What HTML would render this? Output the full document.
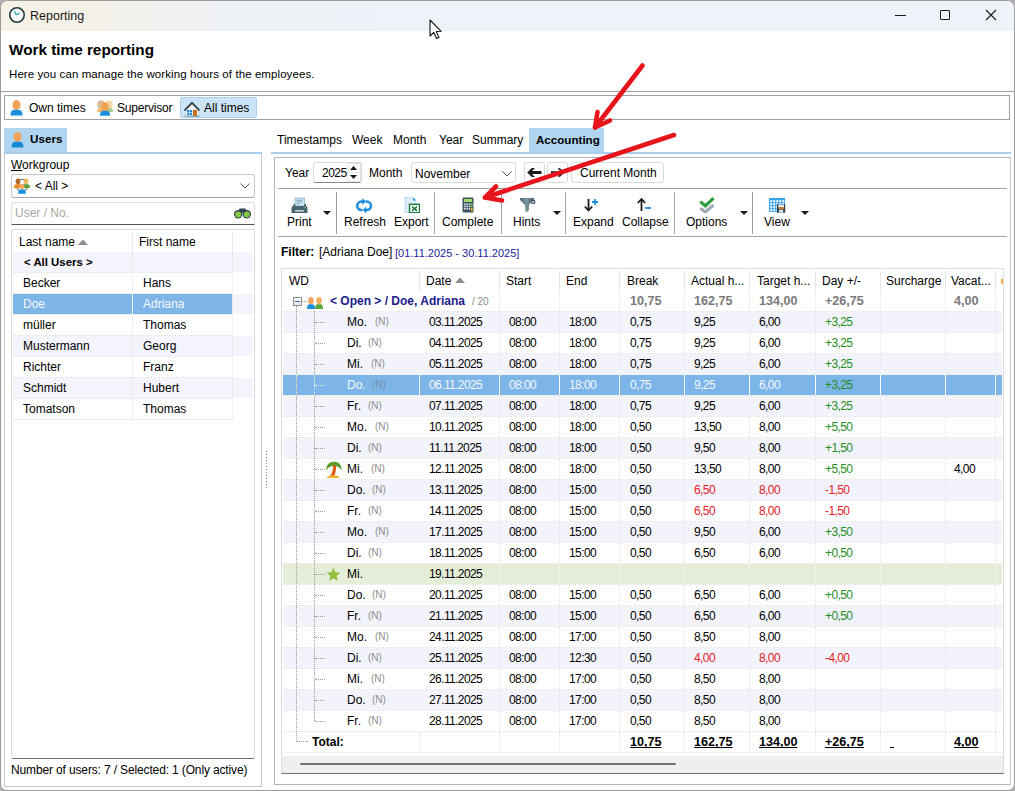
<!DOCTYPE html><html><head><meta charset="utf-8"><style>
*{box-sizing:border-box;margin:0;padding:0}
html,body{width:1015px;height:791px;overflow:hidden;background:#b0b0b0;font-family:"Liberation Sans", sans-serif;color:#000}
.ab{position:absolute}
.t{position:absolute;white-space:nowrap;font-size:12px;line-height:14px}
.win{position:absolute;left:0;top:0px;width:1015px;height:791px;background:#fff;border:1px solid #9c9c9c;border-radius:8px 8px 7px 7px;overflow:hidden}
.title{position:absolute;left:0;top:0;width:1013px;height:30px;background:linear-gradient(90deg,#f6f2e6 0px,#f4f1e8 90px,#eef1f5 220px,#eef2f9 400px,#eef2f9 100%)}
.hl{position:absolute;height:1px;background:#a0a0a0}
.vl{position:absolute;width:1px;background:#a0a0a0}
.grid .c{position:absolute;white-space:nowrap;font-size:11.5px;line-height:21px;top:0;height:21px}
</style></head><body>
<div class="win">
<div class="title"></div>
</div>
<svg class="ab" style="left:8px;top:6px" width="18" height="18" viewBox="0 0 18 18"><circle cx="9" cy="9" r="7.2" fill="#fbfcfc" stroke="#1f3a40" stroke-width="1.6"/><path d="M6.2 5.2 L8.2 8.6 L11.6 7.2" fill="none" stroke="#3bb3bf" stroke-width="1.5"/></svg>
<div class="t" style="left:30px;top:9px;font-size:12.5px;color:#1a1a1a">Reporting</div>
<div class="ab" style="left:895px;top:15px;width:11px;height:1px;background:#1a1a1a"></div>
<div class="ab" style="left:940px;top:10px;width:10px;height:10px;border:1px solid #1a1a1a;border-radius:1px"></div>
<svg class="ab" style="left:985px;top:9px" width="12" height="12" viewBox="0 0 12 12"><path d="M1 1 L11 11 M11 1 L1 11" stroke="#1a1a1a" stroke-width="1.1"/></svg>
<div class="t" style="left:9px;top:41px;font-size:15.3px;font-weight:bold;line-height:17px">Work time reporting</div>
<div class="t" style="left:9px;top:67px;font-size:11.5px;letter-spacing:0.08px">Here you can manage the working hours of the employees.</div>
<div class="ab" style="left:1px;top:91px;width:1013px;height:1px;background:#a0a0a0"></div>
<div class="ab" style="left:4px;top:95px;width:1006px;height:25px;border:1px solid #a0a0a0"></div>
<div class="ab" style="left:180px;top:97px;width:77px;height:21px;background:#cce4f7;border:1px solid #a9d1f2;border-radius:2px"></div>
<div class="t" style="left:29px;top:101px;font-size:12px">Own times</div>
<div class="t" style="left:117px;top:101px;font-size:12px;letter-spacing:-0.2px">Supervisor</div>
<div class="t" style="left:204px;top:101px;font-size:12px">All times</div>
<div class="ab" style="left:4px;top:128px;width:63px;height:25px;background:#b1d5f0"></div>
<div class="t" style="left:30px;top:132px;font-size:11.7px;font-weight:bold">Users</div>
<div class="ab" style="left:4px;top:152px;width:258px;height:2px;background:#a8cfee"></div>
<div class="ab" style="left:4px;top:154px;width:258px;height:633px;border:1px solid #c8c8c8;border-top:none"></div>
<div class="t" style="left:11px;top:158px;font-size:12px"><u>W</u>orkgroup</div>
<div class="ab" style="left:11px;top:174px;width:244px;height:24px;border:1px solid #c8c8c8;border-bottom-color:#a8a8a8;border-radius:3px;background:#fff"></div>
<div class="t" style="left:35px;top:179px;font-size:12px">&lt; All &gt;</div>
<div class="ab" style="left:11px;top:202px;width:244px;height:23px;border:1px solid #e0e0e0;border-bottom:1px solid #555;border-radius:3px 3px 0 0;background:#fff"></div>
<div class="t" style="left:15px;top:206px;font-size:12px;color:#a8a8a8">User / No.</div>
<div class="ab" style="left:11px;top:229px;width:244px;height:530px;border:1px solid #dcdcdc;border-bottom:1px solid #707070;border-radius:2px;background:#fff"></div>
<div class="t" style="left:19px;top:235px;font-size:12px">Last name</div>
<div class="t" style="left:139px;top:235px;font-size:12px">First name</div>
<div class="ab" style="left:132px;top:232px;width:1px;height:20px;background:#e8e8e8"></div>
<div class="ab" style="left:232px;top:232px;width:1px;height:20px;background:#e8e8e8"></div>
<div class="t" style="left:11px;top:763px;font-size:12px;letter-spacing:-0.14px">Number of users: 7 / Selected: 1 (Only active)</div>
<div class="ab" style="left:266px;top:451px;width:1px;height:37px;background:repeating-linear-gradient(#7a7a7a 0 1px,transparent 1px 3px)"></div>
<div class="ab" style="left:529px;top:128px;width:75px;height:25px;background:#b1d5f0"></div>
<div class="t" style="left:277px;top:133px;font-size:12px">Timestamps</div>
<div class="t" style="left:352px;top:133px;font-size:12px">Week</div>
<div class="t" style="left:393px;top:133px;font-size:12px">Month</div>
<div class="t" style="left:439px;top:133px;font-size:12px">Year</div>
<div class="t" style="left:472px;top:133px;font-size:12px">Summary</div>
<div class="t" style="left:536px;top:133px;font-size:11.6px;font-weight:bold">Accounting</div>
<div class="ab" style="left:271px;top:152px;width:740px;height:2px;background:#a8cfee"></div>
<div class="ab" style="left:274px;top:157px;width:737px;height:628px;border:1px solid #b4b4b4;border-right:1px solid #d0d0d0"></div>
<div class="t" style="left:285px;top:166px;font-size:12px">Year</div>
<div class="ab" style="left:313px;top:162px;width:49px;height:21px;border:1px solid #dadada;border-bottom:1px solid #8a8a8a;border-radius:3px"></div>
<div class="t" style="left:322px;top:166px;font-size:12px;letter-spacing:-0.5px">2025</div>
<div class="t" style="left:369px;top:166px;font-size:12px">Month</div>
<div class="ab" style="left:411px;top:162px;width:105px;height:21px;border:1px solid #dadada;border-radius:3px"></div>
<div class="t" style="left:415px;top:167px;font-size:12px">November</div>
<div class="ab" style="left:524px;top:162px;width:21px;height:21px;border:1px solid #dadada;border-radius:3px"></div>
<div class="ab" style="left:547px;top:162px;width:21px;height:21px;border:1px solid #dadada;border-radius:3px"></div>
<div class="ab" style="left:571px;top:162px;width:93px;height:21px;border:1px solid #dadada;border-radius:3px"></div>
<div class="t" style="left:580px;top:166px;font-size:12px">Current Month</div>
<div class="ab" style="left:278px;top:188px;width:729px;height:1px;background:#a0a0a0"></div>
<div class="ab" style="left:278px;top:236px;width:729px;height:1px;background:#a4a4a4"></div>
<div class="ab" style="left:336px;top:192px;width:1px;height:42px;background:#a0a0a0"></div>
<div class="ab" style="left:434px;top:192px;width:1px;height:42px;background:#a0a0a0"></div>
<div class="ab" style="left:501px;top:192px;width:1px;height:42px;background:#a0a0a0"></div>
<div class="ab" style="left:565px;top:192px;width:1px;height:42px;background:#a0a0a0"></div>
<div class="ab" style="left:674px;top:192px;width:1px;height:42px;background:#a0a0a0"></div>
<div class="ab" style="left:752px;top:192px;width:1px;height:42px;background:#a0a0a0"></div>
<div class="t" style="left:287px;top:215px;font-size:12px">Print</div>
<div class="t" style="left:344px;top:215px;font-size:12px">Refresh</div>
<div class="t" style="left:394px;top:215px;font-size:12px">Export</div>
<div class="t" style="left:442px;top:215px;font-size:12px">Complete</div>
<div class="t" style="left:513px;top:215px;font-size:12px">Hints</div>
<div class="t" style="left:573px;top:215px;font-size:12px">Expand</div>
<div class="t" style="left:622px;top:215px;font-size:12px">Collapse</div>
<div class="t" style="left:686px;top:215px;font-size:12px">Options</div>
<div class="t" style="left:764px;top:215px;font-size:12px">View</div>
<div class="t" style="left:281px;top:245px;font-size:12px;font-weight:bold">Filter:</div>
<div class="t" style="left:319px;top:245px;font-size:12px">[Adriana Doe]</div>
<div class="t" style="left:395px;top:246px;font-size:11px;color:#2323a0">[01.11.2025 - 30.11.2025]</div>
<div class="ab" style="left:281px;top:268px;width:723px;height:506px;border:1px solid #dcdcdc;border-bottom:1px solid #707070;background:#fff"></div>
<div class="ab" style="left:13px;top:252px;width:240px;height:20px;background:#f3f4fc"></div>
<div class="ab" style="left:13px;top:272px;width:219px;height:1px;border-top:1px dotted #e0e0e0"></div>
<div class="ab" style="left:13px;top:293px;width:219px;height:1px;border-top:1px dotted #e0e0e0"></div>
<div class="ab" style="left:13px;top:294px;width:240px;height:20px;background:#f3f4fc"></div>
<div class="ab" style="left:13px;top:314px;width:219px;height:1px;border-top:1px dotted #e0e0e0"></div>
<div class="ab" style="left:13px;top:335px;width:219px;height:1px;border-top:1px dotted #e0e0e0"></div>
<div class="ab" style="left:13px;top:336px;width:240px;height:20px;background:#f3f4fc"></div>
<div class="ab" style="left:13px;top:356px;width:219px;height:1px;border-top:1px dotted #e0e0e0"></div>
<div class="ab" style="left:13px;top:377px;width:219px;height:1px;border-top:1px dotted #e0e0e0"></div>
<div class="ab" style="left:13px;top:378px;width:240px;height:20px;background:#f3f4fc"></div>
<div class="ab" style="left:13px;top:398px;width:219px;height:1px;border-top:1px dotted #e0e0e0"></div>
<div class="ab" style="left:13px;top:419px;width:219px;height:1px;border-top:1px dotted #e0e0e0"></div>
<div class="ab" style="left:132px;top:252px;width:1px;height:168px;border-left:1px dotted #e0e0e0"></div>
<div class="ab" style="left:232px;top:252px;width:1px;height:168px;border-left:1px dotted #e0e0e0"></div>
<div class="ab" style="left:13px;top:294px;width:119px;height:20px;background:#7db5e9"></div>
<div class="ab" style="left:133px;top:294px;width:99px;height:20px;background:#7db5e9"></div>
<div class="ab" style="left:132px;top:294px;width:1px;height:20px;background:#fff"></div>
<div class="t" style="left:24px;top:255px;font-size:11.4px;font-weight:bold;line-height:15px">&lt; All Users &gt;</div>
<div class="t" style="left:23px;top:276px;font-size:12px;line-height:15px;color:#000">Becker</div>
<div class="t" style="left:143px;top:276px;font-size:12px;line-height:15px;color:#000">Hans</div>
<div class="t" style="left:23px;top:297px;font-size:12px;line-height:15px;color:#f4f8fd">Doe</div>
<div class="t" style="left:143px;top:297px;font-size:12px;line-height:15px;color:#f4f8fd">Adriana</div>
<div class="t" style="left:23px;top:318px;font-size:12px;line-height:15px;color:#000">müller</div>
<div class="t" style="left:143px;top:318px;font-size:12px;line-height:15px;color:#000">Thomas</div>
<div class="t" style="left:23px;top:339px;font-size:12px;line-height:15px;color:#000">Mustermann</div>
<div class="t" style="left:143px;top:339px;font-size:12px;line-height:15px;color:#000">Georg</div>
<div class="t" style="left:23px;top:360px;font-size:12px;line-height:15px;color:#000">Richter</div>
<div class="t" style="left:143px;top:360px;font-size:12px;line-height:15px;color:#000">Franz</div>
<div class="t" style="left:23px;top:381px;font-size:12px;line-height:15px;color:#000">Schmidt</div>
<div class="t" style="left:143px;top:381px;font-size:12px;line-height:15px;color:#000">Hubert</div>
<div class="t" style="left:23px;top:402px;font-size:12px;line-height:15px;color:#000">Tomatson</div>
<div class="t" style="left:143px;top:402px;font-size:12px;line-height:15px;color:#000">Thomas</div>
<svg class="ab" style="left:78px;top:239px" width="10" height="6"><path d="M0 6 L5 0.5 L10 6Z" fill="#8c8c8c"/></svg>
<div class="t" style="left:289px;top:274px;font-size:12px;line-height:15px">WD</div>
<div class="t" style="left:426px;top:274px;font-size:12px;line-height:15px">Date</div>
<div class="t" style="left:506px;top:274px;font-size:12px;line-height:15px">Start</div>
<div class="t" style="left:566px;top:274px;font-size:12px;line-height:15px">End</div>
<div class="t" style="left:627px;top:274px;font-size:12px;line-height:15px">Break</div>
<div class="t" style="left:691px;top:274px;font-size:12px;line-height:15px">Actual h...</div>
<div class="t" style="left:757px;top:274px;font-size:12px;line-height:15px">Target h...</div>
<div class="t" style="left:822px;top:274px;font-size:12px;line-height:15px">Day +/-</div>
<div class="t" style="left:886px;top:274px;font-size:12px;line-height:15px">Surcharge</div>
<div class="t" style="left:951px;top:274px;font-size:12px;line-height:15px">Vacat...</div>
<div class="ab" style="left:419px;top:271px;width:1px;height:19px;background:#e6e6e6"></div>
<div class="ab" style="left:499px;top:271px;width:1px;height:19px;background:#e6e6e6"></div>
<div class="ab" style="left:559px;top:271px;width:1px;height:19px;background:#e6e6e6"></div>
<div class="ab" style="left:619px;top:271px;width:1px;height:19px;background:#e6e6e6"></div>
<div class="ab" style="left:684px;top:271px;width:1px;height:19px;background:#e6e6e6"></div>
<div class="ab" style="left:749px;top:271px;width:1px;height:19px;background:#e6e6e6"></div>
<div class="ab" style="left:815px;top:271px;width:1px;height:19px;background:#e6e6e6"></div>
<div class="ab" style="left:880px;top:271px;width:1px;height:19px;background:#e6e6e6"></div>
<div class="ab" style="left:945px;top:271px;width:1px;height:19px;background:#e6e6e6"></div>
<div class="ab" style="left:995px;top:271px;width:1px;height:19px;background:#e6e6e6"></div>
<svg class="ab" style="left:455px;top:277px" width="10" height="6"><path d="M0 6 L5 0.5 L10 6Z" fill="#8c8c8c"/></svg>
<div class="t" style="left:630px;top:294px;font-size:12.6px;line-height:15px;font-weight:bold;color:#7a7a7a">10,75</div>
<div class="t" style="left:694px;top:294px;font-size:12.6px;line-height:15px;font-weight:bold;color:#7a7a7a">162,75</div>
<div class="t" style="left:759px;top:294px;font-size:12.6px;line-height:15px;font-weight:bold;color:#7a7a7a">134,00</div>
<div class="t" style="left:825px;top:294px;font-size:12.6px;line-height:15px;font-weight:bold;color:#7a7a7a">+26,75</div>
<div class="t" style="left:954px;top:294px;font-size:12.6px;line-height:15px;font-weight:bold;color:#7a7a7a">4,00</div>
<div class="ab" style="left:499px;top:291px;width:1px;height:20px;border-left:1px dotted #e2e2e2"></div>
<div class="ab" style="left:559px;top:291px;width:1px;height:20px;border-left:1px dotted #e2e2e2"></div>
<div class="ab" style="left:619px;top:291px;width:1px;height:20px;border-left:1px dotted #e2e2e2"></div>
<div class="ab" style="left:684px;top:291px;width:1px;height:20px;border-left:1px dotted #e2e2e2"></div>
<div class="ab" style="left:749px;top:291px;width:1px;height:20px;border-left:1px dotted #e2e2e2"></div>
<div class="ab" style="left:815px;top:291px;width:1px;height:20px;border-left:1px dotted #e2e2e2"></div>
<div class="ab" style="left:880px;top:291px;width:1px;height:20px;border-left:1px dotted #e2e2e2"></div>
<div class="ab" style="left:945px;top:291px;width:1px;height:20px;border-left:1px dotted #e2e2e2"></div>
<div class="ab" style="left:995px;top:291px;width:1px;height:20px;border-left:1px dotted #e2e2e2"></div>
<div class="ab" style="left:1001px;top:279px;width:2px;height:5px;background:#f5b041"></div>
<div class="ab" style="left:283px;top:311px;width:719px;height:1px;border-top:1px dotted #e2e2e2"></div>
<div class="ab" style="left:283px;top:312px;width:719px;height:20px;background:#f2f3fb"></div>
<div class="ab" style="left:499px;top:312px;width:1px;height:20px;border-left:1px dotted #e6e6ee"></div>
<div class="ab" style="left:559px;top:312px;width:1px;height:20px;border-left:1px dotted #e6e6ee"></div>
<div class="ab" style="left:619px;top:312px;width:1px;height:20px;border-left:1px dotted #e6e6ee"></div>
<div class="ab" style="left:684px;top:312px;width:1px;height:20px;border-left:1px dotted #e6e6ee"></div>
<div class="ab" style="left:749px;top:312px;width:1px;height:20px;border-left:1px dotted #e6e6ee"></div>
<div class="ab" style="left:815px;top:312px;width:1px;height:20px;border-left:1px dotted #e6e6ee"></div>
<div class="ab" style="left:880px;top:312px;width:1px;height:20px;border-left:1px dotted #e6e6ee"></div>
<div class="ab" style="left:945px;top:312px;width:1px;height:20px;border-left:1px dotted #e6e6ee"></div>
<div class="ab" style="left:995px;top:312px;width:1px;height:20px;border-left:1px dotted #e6e6ee"></div>
<div class="t" style="left:347px;top:315px;font-size:12px;line-height:15px;color:#000">Mo.</div>
<div class="t" style="left:375px;top:316px;font-size:10px;line-height:12px;color:#8c8c8c">(N)</div>
<div class="t" style="left:429px;top:315px;font-size:12px;line-height:15px;letter-spacing:-0.6px;color:#000">03.11.2025</div>
<div class="t" style="left:509px;top:315px;font-size:12px;line-height:15px;letter-spacing:-0.6px;color:#000">08:00</div>
<div class="t" style="left:569px;top:315px;font-size:12px;line-height:15px;letter-spacing:-0.6px;color:#000">18:00</div>
<div class="t" style="left:630px;top:315px;font-size:12px;line-height:15px;letter-spacing:-0.6px;color:#000">0,75</div>
<div class="t" style="left:694px;top:315px;font-size:12px;line-height:15px;letter-spacing:-0.6px;color:#000">9,25</div>
<div class="t" style="left:759px;top:315px;font-size:12px;line-height:15px;letter-spacing:-0.6px;color:#000">6,00</div>
<div class="t" style="left:825px;top:315px;font-size:12px;line-height:15px;letter-spacing:-0.6px;color:#1f8f1f">+3,25</div>
<div class="ab" style="left:315px;top:322px;width:10px;height:1px;border-top:1px dotted #9a9a9a"></div>
<div class="ab" style="left:283px;top:332px;width:719px;height:1px;border-top:1px dotted #e2e2e2"></div>
<div class="ab" style="left:499px;top:333px;width:1px;height:20px;border-left:1px dotted #e2e2e2"></div>
<div class="ab" style="left:559px;top:333px;width:1px;height:20px;border-left:1px dotted #e2e2e2"></div>
<div class="ab" style="left:619px;top:333px;width:1px;height:20px;border-left:1px dotted #e2e2e2"></div>
<div class="ab" style="left:684px;top:333px;width:1px;height:20px;border-left:1px dotted #e2e2e2"></div>
<div class="ab" style="left:749px;top:333px;width:1px;height:20px;border-left:1px dotted #e2e2e2"></div>
<div class="ab" style="left:815px;top:333px;width:1px;height:20px;border-left:1px dotted #e2e2e2"></div>
<div class="ab" style="left:880px;top:333px;width:1px;height:20px;border-left:1px dotted #e2e2e2"></div>
<div class="ab" style="left:945px;top:333px;width:1px;height:20px;border-left:1px dotted #e2e2e2"></div>
<div class="ab" style="left:995px;top:333px;width:1px;height:20px;border-left:1px dotted #e2e2e2"></div>
<div class="t" style="left:347px;top:336px;font-size:12px;line-height:15px;color:#000">Di.</div>
<div class="t" style="left:368px;top:337px;font-size:10px;line-height:12px;color:#8c8c8c">(N)</div>
<div class="t" style="left:429px;top:336px;font-size:12px;line-height:15px;letter-spacing:-0.6px;color:#000">04.11.2025</div>
<div class="t" style="left:509px;top:336px;font-size:12px;line-height:15px;letter-spacing:-0.6px;color:#000">08:00</div>
<div class="t" style="left:569px;top:336px;font-size:12px;line-height:15px;letter-spacing:-0.6px;color:#000">18:00</div>
<div class="t" style="left:630px;top:336px;font-size:12px;line-height:15px;letter-spacing:-0.6px;color:#000">0,75</div>
<div class="t" style="left:694px;top:336px;font-size:12px;line-height:15px;letter-spacing:-0.6px;color:#000">9,25</div>
<div class="t" style="left:759px;top:336px;font-size:12px;line-height:15px;letter-spacing:-0.6px;color:#000">6,00</div>
<div class="t" style="left:825px;top:336px;font-size:12px;line-height:15px;letter-spacing:-0.6px;color:#1f8f1f">+3,25</div>
<div class="ab" style="left:315px;top:343px;width:10px;height:1px;border-top:1px dotted #9a9a9a"></div>
<div class="ab" style="left:283px;top:353px;width:719px;height:1px;border-top:1px dotted #e2e2e2"></div>
<div class="ab" style="left:283px;top:354px;width:719px;height:20px;background:#f2f3fb"></div>
<div class="ab" style="left:499px;top:354px;width:1px;height:20px;border-left:1px dotted #e6e6ee"></div>
<div class="ab" style="left:559px;top:354px;width:1px;height:20px;border-left:1px dotted #e6e6ee"></div>
<div class="ab" style="left:619px;top:354px;width:1px;height:20px;border-left:1px dotted #e6e6ee"></div>
<div class="ab" style="left:684px;top:354px;width:1px;height:20px;border-left:1px dotted #e6e6ee"></div>
<div class="ab" style="left:749px;top:354px;width:1px;height:20px;border-left:1px dotted #e6e6ee"></div>
<div class="ab" style="left:815px;top:354px;width:1px;height:20px;border-left:1px dotted #e6e6ee"></div>
<div class="ab" style="left:880px;top:354px;width:1px;height:20px;border-left:1px dotted #e6e6ee"></div>
<div class="ab" style="left:945px;top:354px;width:1px;height:20px;border-left:1px dotted #e6e6ee"></div>
<div class="ab" style="left:995px;top:354px;width:1px;height:20px;border-left:1px dotted #e6e6ee"></div>
<div class="t" style="left:347px;top:357px;font-size:12px;line-height:15px;color:#000">Mi.</div>
<div class="t" style="left:371px;top:358px;font-size:10px;line-height:12px;color:#8c8c8c">(N)</div>
<div class="t" style="left:429px;top:357px;font-size:12px;line-height:15px;letter-spacing:-0.6px;color:#000">05.11.2025</div>
<div class="t" style="left:509px;top:357px;font-size:12px;line-height:15px;letter-spacing:-0.6px;color:#000">08:00</div>
<div class="t" style="left:569px;top:357px;font-size:12px;line-height:15px;letter-spacing:-0.6px;color:#000">18:00</div>
<div class="t" style="left:630px;top:357px;font-size:12px;line-height:15px;letter-spacing:-0.6px;color:#000">0,75</div>
<div class="t" style="left:694px;top:357px;font-size:12px;line-height:15px;letter-spacing:-0.6px;color:#000">9,25</div>
<div class="t" style="left:759px;top:357px;font-size:12px;line-height:15px;letter-spacing:-0.6px;color:#000">6,00</div>
<div class="t" style="left:825px;top:357px;font-size:12px;line-height:15px;letter-spacing:-0.6px;color:#1f8f1f">+3,25</div>
<div class="ab" style="left:315px;top:364px;width:10px;height:1px;border-top:1px dotted #9a9a9a"></div>
<div class="ab" style="left:283px;top:374px;width:719px;height:1px;border-top:1px dotted #e2e2e2"></div>
<div class="ab" style="left:283px;top:375px;width:136px;height:20px;background:#7db5e9"></div>
<div class="ab" style="left:420px;top:375px;width:79px;height:20px;background:#7db5e9"></div>
<div class="ab" style="left:500px;top:375px;width:59px;height:20px;background:#7db5e9"></div>
<div class="ab" style="left:560px;top:375px;width:59px;height:20px;background:#7db5e9"></div>
<div class="ab" style="left:620px;top:375px;width:64px;height:20px;background:#7db5e9"></div>
<div class="ab" style="left:685px;top:375px;width:64px;height:20px;background:#7db5e9"></div>
<div class="ab" style="left:750px;top:375px;width:65px;height:20px;background:#7db5e9"></div>
<div class="ab" style="left:816px;top:375px;width:64px;height:20px;background:#7db5e9"></div>
<div class="ab" style="left:881px;top:375px;width:64px;height:20px;background:#7db5e9"></div>
<div class="ab" style="left:946px;top:375px;width:49px;height:20px;background:#7db5e9"></div>
<div class="ab" style="left:996px;top:375px;width:6px;height:20px;background:#7db5e9"></div>
<div class="t" style="left:347px;top:378px;font-size:12px;line-height:15px;color:#f4f8fd">Do.</div>
<div class="t" style="left:372px;top:379px;font-size:10px;line-height:12px;color:#7d8ea4">(N)</div>
<div class="t" style="left:429px;top:378px;font-size:12px;line-height:15px;letter-spacing:-0.6px;color:#f4f8fd">06.11.2025</div>
<div class="t" style="left:509px;top:378px;font-size:12px;line-height:15px;letter-spacing:-0.6px;color:#f4f8fd">08:00</div>
<div class="t" style="left:569px;top:378px;font-size:12px;line-height:15px;letter-spacing:-0.6px;color:#f4f8fd">18:00</div>
<div class="t" style="left:630px;top:378px;font-size:12px;line-height:15px;letter-spacing:-0.6px;color:#f4f8fd">0,75</div>
<div class="t" style="left:694px;top:378px;font-size:12px;line-height:15px;letter-spacing:-0.6px;color:#f4f8fd">9,25</div>
<div class="t" style="left:759px;top:378px;font-size:12px;line-height:15px;letter-spacing:-0.6px;color:#f4f8fd">6,00</div>
<div class="t" style="left:825px;top:378px;font-size:12px;line-height:15px;letter-spacing:-0.6px;color:#1f8f1f">+3,25</div>
<div class="ab" style="left:315px;top:385px;width:10px;height:1px;border-top:1px dotted #f0f6fc"></div>
<div class="ab" style="left:283px;top:395px;width:719px;height:1px;border-top:1px dotted #e2e2e2"></div>
<div class="ab" style="left:283px;top:396px;width:719px;height:20px;background:#f2f3fb"></div>
<div class="ab" style="left:499px;top:396px;width:1px;height:20px;border-left:1px dotted #e6e6ee"></div>
<div class="ab" style="left:559px;top:396px;width:1px;height:20px;border-left:1px dotted #e6e6ee"></div>
<div class="ab" style="left:619px;top:396px;width:1px;height:20px;border-left:1px dotted #e6e6ee"></div>
<div class="ab" style="left:684px;top:396px;width:1px;height:20px;border-left:1px dotted #e6e6ee"></div>
<div class="ab" style="left:749px;top:396px;width:1px;height:20px;border-left:1px dotted #e6e6ee"></div>
<div class="ab" style="left:815px;top:396px;width:1px;height:20px;border-left:1px dotted #e6e6ee"></div>
<div class="ab" style="left:880px;top:396px;width:1px;height:20px;border-left:1px dotted #e6e6ee"></div>
<div class="ab" style="left:945px;top:396px;width:1px;height:20px;border-left:1px dotted #e6e6ee"></div>
<div class="ab" style="left:995px;top:396px;width:1px;height:20px;border-left:1px dotted #e6e6ee"></div>
<div class="t" style="left:347px;top:399px;font-size:12px;line-height:15px;color:#000">Fr.</div>
<div class="t" style="left:368px;top:400px;font-size:10px;line-height:12px;color:#8c8c8c">(N)</div>
<div class="t" style="left:429px;top:399px;font-size:12px;line-height:15px;letter-spacing:-0.6px;color:#000">07.11.2025</div>
<div class="t" style="left:509px;top:399px;font-size:12px;line-height:15px;letter-spacing:-0.6px;color:#000">08:00</div>
<div class="t" style="left:569px;top:399px;font-size:12px;line-height:15px;letter-spacing:-0.6px;color:#000">18:00</div>
<div class="t" style="left:630px;top:399px;font-size:12px;line-height:15px;letter-spacing:-0.6px;color:#000">0,75</div>
<div class="t" style="left:694px;top:399px;font-size:12px;line-height:15px;letter-spacing:-0.6px;color:#000">9,25</div>
<div class="t" style="left:759px;top:399px;font-size:12px;line-height:15px;letter-spacing:-0.6px;color:#000">6,00</div>
<div class="t" style="left:825px;top:399px;font-size:12px;line-height:15px;letter-spacing:-0.6px;color:#1f8f1f">+3,25</div>
<div class="ab" style="left:315px;top:406px;width:10px;height:1px;border-top:1px dotted #9a9a9a"></div>
<div class="ab" style="left:283px;top:416px;width:719px;height:1px;border-top:1px dotted #e2e2e2"></div>
<div class="ab" style="left:499px;top:417px;width:1px;height:20px;border-left:1px dotted #e2e2e2"></div>
<div class="ab" style="left:559px;top:417px;width:1px;height:20px;border-left:1px dotted #e2e2e2"></div>
<div class="ab" style="left:619px;top:417px;width:1px;height:20px;border-left:1px dotted #e2e2e2"></div>
<div class="ab" style="left:684px;top:417px;width:1px;height:20px;border-left:1px dotted #e2e2e2"></div>
<div class="ab" style="left:749px;top:417px;width:1px;height:20px;border-left:1px dotted #e2e2e2"></div>
<div class="ab" style="left:815px;top:417px;width:1px;height:20px;border-left:1px dotted #e2e2e2"></div>
<div class="ab" style="left:880px;top:417px;width:1px;height:20px;border-left:1px dotted #e2e2e2"></div>
<div class="ab" style="left:945px;top:417px;width:1px;height:20px;border-left:1px dotted #e2e2e2"></div>
<div class="ab" style="left:995px;top:417px;width:1px;height:20px;border-left:1px dotted #e2e2e2"></div>
<div class="t" style="left:347px;top:420px;font-size:12px;line-height:15px;color:#000">Mo.</div>
<div class="t" style="left:375px;top:421px;font-size:10px;line-height:12px;color:#8c8c8c">(N)</div>
<div class="t" style="left:429px;top:420px;font-size:12px;line-height:15px;letter-spacing:-0.6px;color:#000">10.11.2025</div>
<div class="t" style="left:509px;top:420px;font-size:12px;line-height:15px;letter-spacing:-0.6px;color:#000">08:00</div>
<div class="t" style="left:569px;top:420px;font-size:12px;line-height:15px;letter-spacing:-0.6px;color:#000">18:00</div>
<div class="t" style="left:630px;top:420px;font-size:12px;line-height:15px;letter-spacing:-0.6px;color:#000">0,50</div>
<div class="t" style="left:694px;top:420px;font-size:12px;line-height:15px;letter-spacing:-0.6px;color:#000">13,50</div>
<div class="t" style="left:759px;top:420px;font-size:12px;line-height:15px;letter-spacing:-0.6px;color:#000">8,00</div>
<div class="t" style="left:825px;top:420px;font-size:12px;line-height:15px;letter-spacing:-0.6px;color:#1f8f1f">+5,50</div>
<div class="ab" style="left:315px;top:427px;width:10px;height:1px;border-top:1px dotted #9a9a9a"></div>
<div class="ab" style="left:283px;top:437px;width:719px;height:1px;border-top:1px dotted #e2e2e2"></div>
<div class="ab" style="left:283px;top:438px;width:719px;height:20px;background:#f2f3fb"></div>
<div class="ab" style="left:499px;top:438px;width:1px;height:20px;border-left:1px dotted #e6e6ee"></div>
<div class="ab" style="left:559px;top:438px;width:1px;height:20px;border-left:1px dotted #e6e6ee"></div>
<div class="ab" style="left:619px;top:438px;width:1px;height:20px;border-left:1px dotted #e6e6ee"></div>
<div class="ab" style="left:684px;top:438px;width:1px;height:20px;border-left:1px dotted #e6e6ee"></div>
<div class="ab" style="left:749px;top:438px;width:1px;height:20px;border-left:1px dotted #e6e6ee"></div>
<div class="ab" style="left:815px;top:438px;width:1px;height:20px;border-left:1px dotted #e6e6ee"></div>
<div class="ab" style="left:880px;top:438px;width:1px;height:20px;border-left:1px dotted #e6e6ee"></div>
<div class="ab" style="left:945px;top:438px;width:1px;height:20px;border-left:1px dotted #e6e6ee"></div>
<div class="ab" style="left:995px;top:438px;width:1px;height:20px;border-left:1px dotted #e6e6ee"></div>
<div class="t" style="left:347px;top:441px;font-size:12px;line-height:15px;color:#000">Di.</div>
<div class="t" style="left:368px;top:442px;font-size:10px;line-height:12px;color:#8c8c8c">(N)</div>
<div class="t" style="left:429px;top:441px;font-size:12px;line-height:15px;letter-spacing:-0.6px;color:#000">11.11.2025</div>
<div class="t" style="left:509px;top:441px;font-size:12px;line-height:15px;letter-spacing:-0.6px;color:#000">08:00</div>
<div class="t" style="left:569px;top:441px;font-size:12px;line-height:15px;letter-spacing:-0.6px;color:#000">18:00</div>
<div class="t" style="left:630px;top:441px;font-size:12px;line-height:15px;letter-spacing:-0.6px;color:#000">0,50</div>
<div class="t" style="left:694px;top:441px;font-size:12px;line-height:15px;letter-spacing:-0.6px;color:#000">9,50</div>
<div class="t" style="left:759px;top:441px;font-size:12px;line-height:15px;letter-spacing:-0.6px;color:#000">8,00</div>
<div class="t" style="left:825px;top:441px;font-size:12px;line-height:15px;letter-spacing:-0.6px;color:#1f8f1f">+1,50</div>
<div class="ab" style="left:315px;top:448px;width:10px;height:1px;border-top:1px dotted #9a9a9a"></div>
<div class="ab" style="left:283px;top:458px;width:719px;height:1px;border-top:1px dotted #e2e2e2"></div>
<div class="ab" style="left:499px;top:459px;width:1px;height:20px;border-left:1px dotted #e2e2e2"></div>
<div class="ab" style="left:559px;top:459px;width:1px;height:20px;border-left:1px dotted #e2e2e2"></div>
<div class="ab" style="left:619px;top:459px;width:1px;height:20px;border-left:1px dotted #e2e2e2"></div>
<div class="ab" style="left:684px;top:459px;width:1px;height:20px;border-left:1px dotted #e2e2e2"></div>
<div class="ab" style="left:749px;top:459px;width:1px;height:20px;border-left:1px dotted #e2e2e2"></div>
<div class="ab" style="left:815px;top:459px;width:1px;height:20px;border-left:1px dotted #e2e2e2"></div>
<div class="ab" style="left:880px;top:459px;width:1px;height:20px;border-left:1px dotted #e2e2e2"></div>
<div class="ab" style="left:945px;top:459px;width:1px;height:20px;border-left:1px dotted #e2e2e2"></div>
<div class="ab" style="left:995px;top:459px;width:1px;height:20px;border-left:1px dotted #e2e2e2"></div>
<div class="t" style="left:347px;top:462px;font-size:12px;line-height:15px;color:#000">Mi.</div>
<div class="t" style="left:371px;top:463px;font-size:10px;line-height:12px;color:#8c8c8c">(N)</div>
<div class="t" style="left:429px;top:462px;font-size:12px;line-height:15px;letter-spacing:-0.6px;color:#000">12.11.2025</div>
<div class="t" style="left:509px;top:462px;font-size:12px;line-height:15px;letter-spacing:-0.6px;color:#000">08:00</div>
<div class="t" style="left:569px;top:462px;font-size:12px;line-height:15px;letter-spacing:-0.6px;color:#000">18:00</div>
<div class="t" style="left:630px;top:462px;font-size:12px;line-height:15px;letter-spacing:-0.6px;color:#000">0,50</div>
<div class="t" style="left:694px;top:462px;font-size:12px;line-height:15px;letter-spacing:-0.6px;color:#000">13,50</div>
<div class="t" style="left:759px;top:462px;font-size:12px;line-height:15px;letter-spacing:-0.6px;color:#000">8,00</div>
<div class="t" style="left:825px;top:462px;font-size:12px;line-height:15px;letter-spacing:-0.6px;color:#1f8f1f">+5,50</div>
<div class="t" style="left:954px;top:462px;font-size:12px;line-height:15px;letter-spacing:-0.6px;color:#000">4,00</div>
<div class="ab" style="left:315px;top:469px;width:10px;height:1px;border-top:1px dotted #9a9a9a"></div>
<div class="ab" style="left:283px;top:479px;width:719px;height:1px;border-top:1px dotted #e2e2e2"></div>
<div class="ab" style="left:283px;top:480px;width:719px;height:20px;background:#f2f3fb"></div>
<div class="ab" style="left:499px;top:480px;width:1px;height:20px;border-left:1px dotted #e6e6ee"></div>
<div class="ab" style="left:559px;top:480px;width:1px;height:20px;border-left:1px dotted #e6e6ee"></div>
<div class="ab" style="left:619px;top:480px;width:1px;height:20px;border-left:1px dotted #e6e6ee"></div>
<div class="ab" style="left:684px;top:480px;width:1px;height:20px;border-left:1px dotted #e6e6ee"></div>
<div class="ab" style="left:749px;top:480px;width:1px;height:20px;border-left:1px dotted #e6e6ee"></div>
<div class="ab" style="left:815px;top:480px;width:1px;height:20px;border-left:1px dotted #e6e6ee"></div>
<div class="ab" style="left:880px;top:480px;width:1px;height:20px;border-left:1px dotted #e6e6ee"></div>
<div class="ab" style="left:945px;top:480px;width:1px;height:20px;border-left:1px dotted #e6e6ee"></div>
<div class="ab" style="left:995px;top:480px;width:1px;height:20px;border-left:1px dotted #e6e6ee"></div>
<div class="t" style="left:347px;top:483px;font-size:12px;line-height:15px;color:#000">Do.</div>
<div class="t" style="left:372px;top:484px;font-size:10px;line-height:12px;color:#8c8c8c">(N)</div>
<div class="t" style="left:429px;top:483px;font-size:12px;line-height:15px;letter-spacing:-0.6px;color:#000">13.11.2025</div>
<div class="t" style="left:509px;top:483px;font-size:12px;line-height:15px;letter-spacing:-0.6px;color:#000">08:00</div>
<div class="t" style="left:569px;top:483px;font-size:12px;line-height:15px;letter-spacing:-0.6px;color:#000">15:00</div>
<div class="t" style="left:630px;top:483px;font-size:12px;line-height:15px;letter-spacing:-0.6px;color:#000">0,50</div>
<div class="t" style="left:694px;top:483px;font-size:12px;line-height:15px;letter-spacing:-0.6px;color:#e8202a">6,50</div>
<div class="t" style="left:759px;top:483px;font-size:12px;line-height:15px;letter-spacing:-0.6px;color:#e8202a">8,00</div>
<div class="t" style="left:825px;top:483px;font-size:12px;line-height:15px;letter-spacing:-0.6px;color:#e8202a">-1,50</div>
<div class="ab" style="left:315px;top:490px;width:10px;height:1px;border-top:1px dotted #9a9a9a"></div>
<div class="ab" style="left:283px;top:500px;width:719px;height:1px;border-top:1px dotted #e2e2e2"></div>
<div class="ab" style="left:499px;top:501px;width:1px;height:20px;border-left:1px dotted #e2e2e2"></div>
<div class="ab" style="left:559px;top:501px;width:1px;height:20px;border-left:1px dotted #e2e2e2"></div>
<div class="ab" style="left:619px;top:501px;width:1px;height:20px;border-left:1px dotted #e2e2e2"></div>
<div class="ab" style="left:684px;top:501px;width:1px;height:20px;border-left:1px dotted #e2e2e2"></div>
<div class="ab" style="left:749px;top:501px;width:1px;height:20px;border-left:1px dotted #e2e2e2"></div>
<div class="ab" style="left:815px;top:501px;width:1px;height:20px;border-left:1px dotted #e2e2e2"></div>
<div class="ab" style="left:880px;top:501px;width:1px;height:20px;border-left:1px dotted #e2e2e2"></div>
<div class="ab" style="left:945px;top:501px;width:1px;height:20px;border-left:1px dotted #e2e2e2"></div>
<div class="ab" style="left:995px;top:501px;width:1px;height:20px;border-left:1px dotted #e2e2e2"></div>
<div class="t" style="left:347px;top:504px;font-size:12px;line-height:15px;color:#000">Fr.</div>
<div class="t" style="left:368px;top:505px;font-size:10px;line-height:12px;color:#8c8c8c">(N)</div>
<div class="t" style="left:429px;top:504px;font-size:12px;line-height:15px;letter-spacing:-0.6px;color:#000">14.11.2025</div>
<div class="t" style="left:509px;top:504px;font-size:12px;line-height:15px;letter-spacing:-0.6px;color:#000">08:00</div>
<div class="t" style="left:569px;top:504px;font-size:12px;line-height:15px;letter-spacing:-0.6px;color:#000">15:00</div>
<div class="t" style="left:630px;top:504px;font-size:12px;line-height:15px;letter-spacing:-0.6px;color:#000">0,50</div>
<div class="t" style="left:694px;top:504px;font-size:12px;line-height:15px;letter-spacing:-0.6px;color:#e8202a">6,50</div>
<div class="t" style="left:759px;top:504px;font-size:12px;line-height:15px;letter-spacing:-0.6px;color:#e8202a">8,00</div>
<div class="t" style="left:825px;top:504px;font-size:12px;line-height:15px;letter-spacing:-0.6px;color:#e8202a">-1,50</div>
<div class="ab" style="left:315px;top:511px;width:10px;height:1px;border-top:1px dotted #9a9a9a"></div>
<div class="ab" style="left:283px;top:521px;width:719px;height:1px;border-top:1px dotted #e2e2e2"></div>
<div class="ab" style="left:283px;top:522px;width:719px;height:20px;background:#f2f3fb"></div>
<div class="ab" style="left:499px;top:522px;width:1px;height:20px;border-left:1px dotted #e6e6ee"></div>
<div class="ab" style="left:559px;top:522px;width:1px;height:20px;border-left:1px dotted #e6e6ee"></div>
<div class="ab" style="left:619px;top:522px;width:1px;height:20px;border-left:1px dotted #e6e6ee"></div>
<div class="ab" style="left:684px;top:522px;width:1px;height:20px;border-left:1px dotted #e6e6ee"></div>
<div class="ab" style="left:749px;top:522px;width:1px;height:20px;border-left:1px dotted #e6e6ee"></div>
<div class="ab" style="left:815px;top:522px;width:1px;height:20px;border-left:1px dotted #e6e6ee"></div>
<div class="ab" style="left:880px;top:522px;width:1px;height:20px;border-left:1px dotted #e6e6ee"></div>
<div class="ab" style="left:945px;top:522px;width:1px;height:20px;border-left:1px dotted #e6e6ee"></div>
<div class="ab" style="left:995px;top:522px;width:1px;height:20px;border-left:1px dotted #e6e6ee"></div>
<div class="t" style="left:347px;top:525px;font-size:12px;line-height:15px;color:#000">Mo.</div>
<div class="t" style="left:375px;top:526px;font-size:10px;line-height:12px;color:#8c8c8c">(N)</div>
<div class="t" style="left:429px;top:525px;font-size:12px;line-height:15px;letter-spacing:-0.6px;color:#000">17.11.2025</div>
<div class="t" style="left:509px;top:525px;font-size:12px;line-height:15px;letter-spacing:-0.6px;color:#000">08:00</div>
<div class="t" style="left:569px;top:525px;font-size:12px;line-height:15px;letter-spacing:-0.6px;color:#000">15:00</div>
<div class="t" style="left:630px;top:525px;font-size:12px;line-height:15px;letter-spacing:-0.6px;color:#000">0,50</div>
<div class="t" style="left:694px;top:525px;font-size:12px;line-height:15px;letter-spacing:-0.6px;color:#000">9,50</div>
<div class="t" style="left:759px;top:525px;font-size:12px;line-height:15px;letter-spacing:-0.6px;color:#000">6,00</div>
<div class="t" style="left:825px;top:525px;font-size:12px;line-height:15px;letter-spacing:-0.6px;color:#1f8f1f">+3,50</div>
<div class="ab" style="left:315px;top:532px;width:10px;height:1px;border-top:1px dotted #9a9a9a"></div>
<div class="ab" style="left:283px;top:542px;width:719px;height:1px;border-top:1px dotted #e2e2e2"></div>
<div class="ab" style="left:499px;top:543px;width:1px;height:20px;border-left:1px dotted #e2e2e2"></div>
<div class="ab" style="left:559px;top:543px;width:1px;height:20px;border-left:1px dotted #e2e2e2"></div>
<div class="ab" style="left:619px;top:543px;width:1px;height:20px;border-left:1px dotted #e2e2e2"></div>
<div class="ab" style="left:684px;top:543px;width:1px;height:20px;border-left:1px dotted #e2e2e2"></div>
<div class="ab" style="left:749px;top:543px;width:1px;height:20px;border-left:1px dotted #e2e2e2"></div>
<div class="ab" style="left:815px;top:543px;width:1px;height:20px;border-left:1px dotted #e2e2e2"></div>
<div class="ab" style="left:880px;top:543px;width:1px;height:20px;border-left:1px dotted #e2e2e2"></div>
<div class="ab" style="left:945px;top:543px;width:1px;height:20px;border-left:1px dotted #e2e2e2"></div>
<div class="ab" style="left:995px;top:543px;width:1px;height:20px;border-left:1px dotted #e2e2e2"></div>
<div class="t" style="left:347px;top:546px;font-size:12px;line-height:15px;color:#000">Di.</div>
<div class="t" style="left:368px;top:547px;font-size:10px;line-height:12px;color:#8c8c8c">(N)</div>
<div class="t" style="left:429px;top:546px;font-size:12px;line-height:15px;letter-spacing:-0.6px;color:#000">18.11.2025</div>
<div class="t" style="left:509px;top:546px;font-size:12px;line-height:15px;letter-spacing:-0.6px;color:#000">08:00</div>
<div class="t" style="left:569px;top:546px;font-size:12px;line-height:15px;letter-spacing:-0.6px;color:#000">15:00</div>
<div class="t" style="left:630px;top:546px;font-size:12px;line-height:15px;letter-spacing:-0.6px;color:#000">0,50</div>
<div class="t" style="left:694px;top:546px;font-size:12px;line-height:15px;letter-spacing:-0.6px;color:#000">6,50</div>
<div class="t" style="left:759px;top:546px;font-size:12px;line-height:15px;letter-spacing:-0.6px;color:#000">6,00</div>
<div class="t" style="left:825px;top:546px;font-size:12px;line-height:15px;letter-spacing:-0.6px;color:#1f8f1f">+0,50</div>
<div class="ab" style="left:315px;top:553px;width:10px;height:1px;border-top:1px dotted #9a9a9a"></div>
<div class="ab" style="left:283px;top:563px;width:719px;height:1px;border-top:1px dotted #e2e2e2"></div>
<div class="ab" style="left:283px;top:564px;width:719px;height:20px;background:#e4eed8"></div>
<div class="ab" style="left:499px;top:564px;width:1px;height:20px;border-left:1px dotted #f4f8ef"></div>
<div class="ab" style="left:559px;top:564px;width:1px;height:20px;border-left:1px dotted #f4f8ef"></div>
<div class="ab" style="left:619px;top:564px;width:1px;height:20px;border-left:1px dotted #f4f8ef"></div>
<div class="ab" style="left:684px;top:564px;width:1px;height:20px;border-left:1px dotted #f4f8ef"></div>
<div class="ab" style="left:749px;top:564px;width:1px;height:20px;border-left:1px dotted #f4f8ef"></div>
<div class="ab" style="left:815px;top:564px;width:1px;height:20px;border-left:1px dotted #f4f8ef"></div>
<div class="ab" style="left:880px;top:564px;width:1px;height:20px;border-left:1px dotted #f4f8ef"></div>
<div class="ab" style="left:945px;top:564px;width:1px;height:20px;border-left:1px dotted #f4f8ef"></div>
<div class="ab" style="left:995px;top:564px;width:1px;height:20px;border-left:1px dotted #f4f8ef"></div>
<div class="t" style="left:347px;top:567px;font-size:12px;line-height:15px;color:#000">Mi.</div>
<div class="t" style="left:429px;top:567px;font-size:12px;line-height:15px;letter-spacing:-0.6px;color:#000">19.11.2025</div>
<div class="ab" style="left:315px;top:574px;width:10px;height:1px;border-top:1px dotted #9a9a9a"></div>
<div class="ab" style="left:283px;top:584px;width:719px;height:1px;border-top:1px dotted #e2e2e2"></div>
<div class="ab" style="left:499px;top:585px;width:1px;height:20px;border-left:1px dotted #e2e2e2"></div>
<div class="ab" style="left:559px;top:585px;width:1px;height:20px;border-left:1px dotted #e2e2e2"></div>
<div class="ab" style="left:619px;top:585px;width:1px;height:20px;border-left:1px dotted #e2e2e2"></div>
<div class="ab" style="left:684px;top:585px;width:1px;height:20px;border-left:1px dotted #e2e2e2"></div>
<div class="ab" style="left:749px;top:585px;width:1px;height:20px;border-left:1px dotted #e2e2e2"></div>
<div class="ab" style="left:815px;top:585px;width:1px;height:20px;border-left:1px dotted #e2e2e2"></div>
<div class="ab" style="left:880px;top:585px;width:1px;height:20px;border-left:1px dotted #e2e2e2"></div>
<div class="ab" style="left:945px;top:585px;width:1px;height:20px;border-left:1px dotted #e2e2e2"></div>
<div class="ab" style="left:995px;top:585px;width:1px;height:20px;border-left:1px dotted #e2e2e2"></div>
<div class="t" style="left:347px;top:588px;font-size:12px;line-height:15px;color:#000">Do.</div>
<div class="t" style="left:372px;top:589px;font-size:10px;line-height:12px;color:#8c8c8c">(N)</div>
<div class="t" style="left:429px;top:588px;font-size:12px;line-height:15px;letter-spacing:-0.6px;color:#000">20.11.2025</div>
<div class="t" style="left:509px;top:588px;font-size:12px;line-height:15px;letter-spacing:-0.6px;color:#000">08:00</div>
<div class="t" style="left:569px;top:588px;font-size:12px;line-height:15px;letter-spacing:-0.6px;color:#000">15:00</div>
<div class="t" style="left:630px;top:588px;font-size:12px;line-height:15px;letter-spacing:-0.6px;color:#000">0,50</div>
<div class="t" style="left:694px;top:588px;font-size:12px;line-height:15px;letter-spacing:-0.6px;color:#000">6,50</div>
<div class="t" style="left:759px;top:588px;font-size:12px;line-height:15px;letter-spacing:-0.6px;color:#000">6,00</div>
<div class="t" style="left:825px;top:588px;font-size:12px;line-height:15px;letter-spacing:-0.6px;color:#1f8f1f">+0,50</div>
<div class="ab" style="left:315px;top:595px;width:10px;height:1px;border-top:1px dotted #9a9a9a"></div>
<div class="ab" style="left:283px;top:605px;width:719px;height:1px;border-top:1px dotted #e2e2e2"></div>
<div class="ab" style="left:283px;top:606px;width:719px;height:20px;background:#f2f3fb"></div>
<div class="ab" style="left:499px;top:606px;width:1px;height:20px;border-left:1px dotted #e6e6ee"></div>
<div class="ab" style="left:559px;top:606px;width:1px;height:20px;border-left:1px dotted #e6e6ee"></div>
<div class="ab" style="left:619px;top:606px;width:1px;height:20px;border-left:1px dotted #e6e6ee"></div>
<div class="ab" style="left:684px;top:606px;width:1px;height:20px;border-left:1px dotted #e6e6ee"></div>
<div class="ab" style="left:749px;top:606px;width:1px;height:20px;border-left:1px dotted #e6e6ee"></div>
<div class="ab" style="left:815px;top:606px;width:1px;height:20px;border-left:1px dotted #e6e6ee"></div>
<div class="ab" style="left:880px;top:606px;width:1px;height:20px;border-left:1px dotted #e6e6ee"></div>
<div class="ab" style="left:945px;top:606px;width:1px;height:20px;border-left:1px dotted #e6e6ee"></div>
<div class="ab" style="left:995px;top:606px;width:1px;height:20px;border-left:1px dotted #e6e6ee"></div>
<div class="t" style="left:347px;top:609px;font-size:12px;line-height:15px;color:#000">Fr.</div>
<div class="t" style="left:368px;top:610px;font-size:10px;line-height:12px;color:#8c8c8c">(N)</div>
<div class="t" style="left:429px;top:609px;font-size:12px;line-height:15px;letter-spacing:-0.6px;color:#000">21.11.2025</div>
<div class="t" style="left:509px;top:609px;font-size:12px;line-height:15px;letter-spacing:-0.6px;color:#000">08:00</div>
<div class="t" style="left:569px;top:609px;font-size:12px;line-height:15px;letter-spacing:-0.6px;color:#000">15:00</div>
<div class="t" style="left:630px;top:609px;font-size:12px;line-height:15px;letter-spacing:-0.6px;color:#000">0,50</div>
<div class="t" style="left:694px;top:609px;font-size:12px;line-height:15px;letter-spacing:-0.6px;color:#000">6,50</div>
<div class="t" style="left:759px;top:609px;font-size:12px;line-height:15px;letter-spacing:-0.6px;color:#000">6,00</div>
<div class="t" style="left:825px;top:609px;font-size:12px;line-height:15px;letter-spacing:-0.6px;color:#1f8f1f">+0,50</div>
<div class="ab" style="left:315px;top:616px;width:10px;height:1px;border-top:1px dotted #9a9a9a"></div>
<div class="ab" style="left:283px;top:626px;width:719px;height:1px;border-top:1px dotted #e2e2e2"></div>
<div class="ab" style="left:499px;top:627px;width:1px;height:20px;border-left:1px dotted #e2e2e2"></div>
<div class="ab" style="left:559px;top:627px;width:1px;height:20px;border-left:1px dotted #e2e2e2"></div>
<div class="ab" style="left:619px;top:627px;width:1px;height:20px;border-left:1px dotted #e2e2e2"></div>
<div class="ab" style="left:684px;top:627px;width:1px;height:20px;border-left:1px dotted #e2e2e2"></div>
<div class="ab" style="left:749px;top:627px;width:1px;height:20px;border-left:1px dotted #e2e2e2"></div>
<div class="ab" style="left:815px;top:627px;width:1px;height:20px;border-left:1px dotted #e2e2e2"></div>
<div class="ab" style="left:880px;top:627px;width:1px;height:20px;border-left:1px dotted #e2e2e2"></div>
<div class="ab" style="left:945px;top:627px;width:1px;height:20px;border-left:1px dotted #e2e2e2"></div>
<div class="ab" style="left:995px;top:627px;width:1px;height:20px;border-left:1px dotted #e2e2e2"></div>
<div class="t" style="left:347px;top:630px;font-size:12px;line-height:15px;color:#000">Mo.</div>
<div class="t" style="left:375px;top:631px;font-size:10px;line-height:12px;color:#8c8c8c">(N)</div>
<div class="t" style="left:429px;top:630px;font-size:12px;line-height:15px;letter-spacing:-0.6px;color:#000">24.11.2025</div>
<div class="t" style="left:509px;top:630px;font-size:12px;line-height:15px;letter-spacing:-0.6px;color:#000">08:00</div>
<div class="t" style="left:569px;top:630px;font-size:12px;line-height:15px;letter-spacing:-0.6px;color:#000">17:00</div>
<div class="t" style="left:630px;top:630px;font-size:12px;line-height:15px;letter-spacing:-0.6px;color:#000">0,50</div>
<div class="t" style="left:694px;top:630px;font-size:12px;line-height:15px;letter-spacing:-0.6px;color:#000">8,50</div>
<div class="t" style="left:759px;top:630px;font-size:12px;line-height:15px;letter-spacing:-0.6px;color:#000">8,00</div>
<div class="ab" style="left:315px;top:637px;width:10px;height:1px;border-top:1px dotted #9a9a9a"></div>
<div class="ab" style="left:283px;top:647px;width:719px;height:1px;border-top:1px dotted #e2e2e2"></div>
<div class="ab" style="left:283px;top:648px;width:719px;height:20px;background:#f2f3fb"></div>
<div class="ab" style="left:499px;top:648px;width:1px;height:20px;border-left:1px dotted #e6e6ee"></div>
<div class="ab" style="left:559px;top:648px;width:1px;height:20px;border-left:1px dotted #e6e6ee"></div>
<div class="ab" style="left:619px;top:648px;width:1px;height:20px;border-left:1px dotted #e6e6ee"></div>
<div class="ab" style="left:684px;top:648px;width:1px;height:20px;border-left:1px dotted #e6e6ee"></div>
<div class="ab" style="left:749px;top:648px;width:1px;height:20px;border-left:1px dotted #e6e6ee"></div>
<div class="ab" style="left:815px;top:648px;width:1px;height:20px;border-left:1px dotted #e6e6ee"></div>
<div class="ab" style="left:880px;top:648px;width:1px;height:20px;border-left:1px dotted #e6e6ee"></div>
<div class="ab" style="left:945px;top:648px;width:1px;height:20px;border-left:1px dotted #e6e6ee"></div>
<div class="ab" style="left:995px;top:648px;width:1px;height:20px;border-left:1px dotted #e6e6ee"></div>
<div class="t" style="left:347px;top:651px;font-size:12px;line-height:15px;color:#000">Di.</div>
<div class="t" style="left:368px;top:652px;font-size:10px;line-height:12px;color:#8c8c8c">(N)</div>
<div class="t" style="left:429px;top:651px;font-size:12px;line-height:15px;letter-spacing:-0.6px;color:#000">25.11.2025</div>
<div class="t" style="left:509px;top:651px;font-size:12px;line-height:15px;letter-spacing:-0.6px;color:#000">08:00</div>
<div class="t" style="left:569px;top:651px;font-size:12px;line-height:15px;letter-spacing:-0.6px;color:#000">12:30</div>
<div class="t" style="left:630px;top:651px;font-size:12px;line-height:15px;letter-spacing:-0.6px;color:#000">0,50</div>
<div class="t" style="left:694px;top:651px;font-size:12px;line-height:15px;letter-spacing:-0.6px;color:#e8202a">4,00</div>
<div class="t" style="left:759px;top:651px;font-size:12px;line-height:15px;letter-spacing:-0.6px;color:#e8202a">8,00</div>
<div class="t" style="left:825px;top:651px;font-size:12px;line-height:15px;letter-spacing:-0.6px;color:#e8202a">-4,00</div>
<div class="ab" style="left:315px;top:658px;width:10px;height:1px;border-top:1px dotted #9a9a9a"></div>
<div class="ab" style="left:283px;top:668px;width:719px;height:1px;border-top:1px dotted #e2e2e2"></div>
<div class="ab" style="left:499px;top:669px;width:1px;height:20px;border-left:1px dotted #e2e2e2"></div>
<div class="ab" style="left:559px;top:669px;width:1px;height:20px;border-left:1px dotted #e2e2e2"></div>
<div class="ab" style="left:619px;top:669px;width:1px;height:20px;border-left:1px dotted #e2e2e2"></div>
<div class="ab" style="left:684px;top:669px;width:1px;height:20px;border-left:1px dotted #e2e2e2"></div>
<div class="ab" style="left:749px;top:669px;width:1px;height:20px;border-left:1px dotted #e2e2e2"></div>
<div class="ab" style="left:815px;top:669px;width:1px;height:20px;border-left:1px dotted #e2e2e2"></div>
<div class="ab" style="left:880px;top:669px;width:1px;height:20px;border-left:1px dotted #e2e2e2"></div>
<div class="ab" style="left:945px;top:669px;width:1px;height:20px;border-left:1px dotted #e2e2e2"></div>
<div class="ab" style="left:995px;top:669px;width:1px;height:20px;border-left:1px dotted #e2e2e2"></div>
<div class="t" style="left:347px;top:672px;font-size:12px;line-height:15px;color:#000">Mi.</div>
<div class="t" style="left:371px;top:673px;font-size:10px;line-height:12px;color:#8c8c8c">(N)</div>
<div class="t" style="left:429px;top:672px;font-size:12px;line-height:15px;letter-spacing:-0.6px;color:#000">26.11.2025</div>
<div class="t" style="left:509px;top:672px;font-size:12px;line-height:15px;letter-spacing:-0.6px;color:#000">08:00</div>
<div class="t" style="left:569px;top:672px;font-size:12px;line-height:15px;letter-spacing:-0.6px;color:#000">17:00</div>
<div class="t" style="left:630px;top:672px;font-size:12px;line-height:15px;letter-spacing:-0.6px;color:#000">0,50</div>
<div class="t" style="left:694px;top:672px;font-size:12px;line-height:15px;letter-spacing:-0.6px;color:#000">8,50</div>
<div class="t" style="left:759px;top:672px;font-size:12px;line-height:15px;letter-spacing:-0.6px;color:#000">8,00</div>
<div class="ab" style="left:315px;top:679px;width:10px;height:1px;border-top:1px dotted #9a9a9a"></div>
<div class="ab" style="left:283px;top:689px;width:719px;height:1px;border-top:1px dotted #e2e2e2"></div>
<div class="ab" style="left:283px;top:690px;width:719px;height:20px;background:#f2f3fb"></div>
<div class="ab" style="left:499px;top:690px;width:1px;height:20px;border-left:1px dotted #e6e6ee"></div>
<div class="ab" style="left:559px;top:690px;width:1px;height:20px;border-left:1px dotted #e6e6ee"></div>
<div class="ab" style="left:619px;top:690px;width:1px;height:20px;border-left:1px dotted #e6e6ee"></div>
<div class="ab" style="left:684px;top:690px;width:1px;height:20px;border-left:1px dotted #e6e6ee"></div>
<div class="ab" style="left:749px;top:690px;width:1px;height:20px;border-left:1px dotted #e6e6ee"></div>
<div class="ab" style="left:815px;top:690px;width:1px;height:20px;border-left:1px dotted #e6e6ee"></div>
<div class="ab" style="left:880px;top:690px;width:1px;height:20px;border-left:1px dotted #e6e6ee"></div>
<div class="ab" style="left:945px;top:690px;width:1px;height:20px;border-left:1px dotted #e6e6ee"></div>
<div class="ab" style="left:995px;top:690px;width:1px;height:20px;border-left:1px dotted #e6e6ee"></div>
<div class="t" style="left:347px;top:693px;font-size:12px;line-height:15px;color:#000">Do.</div>
<div class="t" style="left:372px;top:694px;font-size:10px;line-height:12px;color:#8c8c8c">(N)</div>
<div class="t" style="left:429px;top:693px;font-size:12px;line-height:15px;letter-spacing:-0.6px;color:#000">27.11.2025</div>
<div class="t" style="left:509px;top:693px;font-size:12px;line-height:15px;letter-spacing:-0.6px;color:#000">08:00</div>
<div class="t" style="left:569px;top:693px;font-size:12px;line-height:15px;letter-spacing:-0.6px;color:#000">17:00</div>
<div class="t" style="left:630px;top:693px;font-size:12px;line-height:15px;letter-spacing:-0.6px;color:#000">0,50</div>
<div class="t" style="left:694px;top:693px;font-size:12px;line-height:15px;letter-spacing:-0.6px;color:#000">8,50</div>
<div class="t" style="left:759px;top:693px;font-size:12px;line-height:15px;letter-spacing:-0.6px;color:#000">8,00</div>
<div class="ab" style="left:315px;top:700px;width:10px;height:1px;border-top:1px dotted #9a9a9a"></div>
<div class="ab" style="left:283px;top:710px;width:719px;height:1px;border-top:1px dotted #e2e2e2"></div>
<div class="ab" style="left:499px;top:711px;width:1px;height:20px;border-left:1px dotted #e2e2e2"></div>
<div class="ab" style="left:559px;top:711px;width:1px;height:20px;border-left:1px dotted #e2e2e2"></div>
<div class="ab" style="left:619px;top:711px;width:1px;height:20px;border-left:1px dotted #e2e2e2"></div>
<div class="ab" style="left:684px;top:711px;width:1px;height:20px;border-left:1px dotted #e2e2e2"></div>
<div class="ab" style="left:749px;top:711px;width:1px;height:20px;border-left:1px dotted #e2e2e2"></div>
<div class="ab" style="left:815px;top:711px;width:1px;height:20px;border-left:1px dotted #e2e2e2"></div>
<div class="ab" style="left:880px;top:711px;width:1px;height:20px;border-left:1px dotted #e2e2e2"></div>
<div class="ab" style="left:945px;top:711px;width:1px;height:20px;border-left:1px dotted #e2e2e2"></div>
<div class="ab" style="left:995px;top:711px;width:1px;height:20px;border-left:1px dotted #e2e2e2"></div>
<div class="t" style="left:347px;top:714px;font-size:12px;line-height:15px;color:#000">Fr.</div>
<div class="t" style="left:368px;top:715px;font-size:10px;line-height:12px;color:#8c8c8c">(N)</div>
<div class="t" style="left:429px;top:714px;font-size:12px;line-height:15px;letter-spacing:-0.6px;color:#000">28.11.2025</div>
<div class="t" style="left:509px;top:714px;font-size:12px;line-height:15px;letter-spacing:-0.6px;color:#000">08:00</div>
<div class="t" style="left:569px;top:714px;font-size:12px;line-height:15px;letter-spacing:-0.6px;color:#000">17:00</div>
<div class="t" style="left:630px;top:714px;font-size:12px;line-height:15px;letter-spacing:-0.6px;color:#000">0,50</div>
<div class="t" style="left:694px;top:714px;font-size:12px;line-height:15px;letter-spacing:-0.6px;color:#000">8,50</div>
<div class="t" style="left:759px;top:714px;font-size:12px;line-height:15px;letter-spacing:-0.6px;color:#000">8,00</div>
<div class="ab" style="left:315px;top:721px;width:10px;height:1px;border-top:1px dotted #9a9a9a"></div>
<div class="ab" style="left:283px;top:731px;width:719px;height:1px;border-top:1px dotted #e2e2e2"></div>
<div class="ab" style="left:296px;top:306px;width:1px;height:436px;border-left:1px dotted #9a9a9a"></div>
<div class="ab" style="left:314px;top:311px;width:1px;height:410px;border-left:1px dotted #9a9a9a"></div>
<div class="ab" style="left:296px;top:375px;width:1px;height:20px;border-left:1px dotted #f0f6fc"></div>
<div class="ab" style="left:314px;top:375px;width:1px;height:20px;border-left:1px dotted #f0f6fc"></div>
<div class="ab" style="left:302px;top:301px;width:5px;height:1px;border-top:1px dotted #9a9a9a"></div>
<div class="ab" style="left:297px;top:741px;width:11px;height:1px;border-top:1px dotted #9a9a9a"></div>
<div class="ab" style="left:293px;top:297px;width:9px;height:9px;border:1px solid #8e8e8e;background:linear-gradient(#fff,#e6e6e6)"></div>
<div class="ab" style="left:295px;top:301px;width:5px;height:1px;background:#2f5fa8"></div>
<div class="t" style="left:330px;top:294px;font-size:12px;line-height:15px;font-weight:bold;color:#1b1b8c">&lt; Open &gt; / Doe, Adriana</div>
<div class="t" style="left:472px;top:296px;font-size:10px;line-height:12px;color:#8c8c8c">/ 20</div>
<div class="ab" style="left:419px;top:732px;width:1px;height:20px;border-left:1px dotted #e2e2e2"></div>
<div class="ab" style="left:499px;top:732px;width:1px;height:20px;border-left:1px dotted #e2e2e2"></div>
<div class="ab" style="left:559px;top:732px;width:1px;height:20px;border-left:1px dotted #e2e2e2"></div>
<div class="ab" style="left:619px;top:732px;width:1px;height:20px;border-left:1px dotted #e2e2e2"></div>
<div class="ab" style="left:684px;top:732px;width:1px;height:20px;border-left:1px dotted #e2e2e2"></div>
<div class="ab" style="left:749px;top:732px;width:1px;height:20px;border-left:1px dotted #e2e2e2"></div>
<div class="ab" style="left:815px;top:732px;width:1px;height:20px;border-left:1px dotted #e2e2e2"></div>
<div class="ab" style="left:880px;top:732px;width:1px;height:20px;border-left:1px dotted #e2e2e2"></div>
<div class="ab" style="left:945px;top:732px;width:1px;height:20px;border-left:1px dotted #e2e2e2"></div>
<div class="ab" style="left:995px;top:732px;width:1px;height:20px;border-left:1px dotted #e2e2e2"></div>
<div class="ab" style="left:283px;top:752px;width:719px;height:1px;border-top:1px dotted #e2e2e2"></div>
<div class="t" style="left:312px;top:735px;font-size:12px;line-height:15px;font-weight:bold">Total:</div>
<div class="t" style="left:630px;top:735px;font-size:12.6px;line-height:15px;font-weight:bold;text-decoration:underline;text-decoration-skip-ink:none">10,75</div>
<div class="t" style="left:694px;top:735px;font-size:12.6px;line-height:15px;font-weight:bold;text-decoration:underline;text-decoration-skip-ink:none">162,75</div>
<div class="t" style="left:759px;top:735px;font-size:12.6px;line-height:15px;font-weight:bold;text-decoration:underline;text-decoration-skip-ink:none">134,00</div>
<div class="t" style="left:825px;top:735px;font-size:12.6px;line-height:15px;font-weight:bold;text-decoration:underline;text-decoration-skip-ink:none">+26,75</div>
<div class="t" style="left:954px;top:735px;font-size:12.6px;line-height:15px;font-weight:bold;text-decoration:underline;text-decoration-skip-ink:none">4,00</div>
<div class="ab" style="left:890px;top:747px;width:4px;height:1px;background:#000"></div>
<div class="ab" style="left:282px;top:756px;width:721px;height:17px;background:#efefef"></div>
<div class="ab" style="left:300px;top:763px;width:376px;height:2px;background:#747474;border-radius:1px"></div>
<svg class="ab" style="left:10px;top:100px" width="13" height="16" viewBox="0 0 13 16"><ellipse cx="6.5" cy="5" rx="4" ry="5" fill="#f3a35a"/><path d="M0.5 15.5 Q0.5 10 4 9.8 L9 9.8 Q12.5 10 12.5 15.5 Z" fill="#1a8fdc"/></svg>
<svg class="ab" style="left:11px;top:132px" width="13" height="16" viewBox="0 0 13 16"><ellipse cx="6.5" cy="5" rx="4" ry="5" fill="#f0a55e"/><path d="M0.5 15.5 Q0.5 10 4 9.8 L9 9.8 Q12.5 10 12.5 15.5 Z" fill="#1a8ad6"/></svg>
<svg class="ab" style="left:96px;top:100px" width="18" height="16" viewBox="0 0 18 16"><ellipse cx="5" cy="4.5" rx="3.6" ry="4.2" fill="#dcb896"/><ellipse cx="13" cy="4.5" rx="3.6" ry="4.2" fill="#f6d9aa"/><path d="M1 12 Q1 8 4 8 L7 8 L7 12Z" fill="#f2b872"/><path d="M11 8 L14 8 Q17 8 17 12 L11 12Z" fill="#a8cc8c"/><ellipse cx="9" cy="6.8" rx="3.6" ry="4.6" fill="#f4a04e"/><path d="M4 15.8 Q4 11 7 10.8 L11 10.8 Q14 11 14 15.8Z" fill="#1a8ee0"/></svg>
<svg class="ab" style="left:183px;top:101px" width="18" height="16" viewBox="0 0 18 16"><path d="M3 9 L9 3 L15 9 L15 15 L3 15Z" fill="#f4f4f6"/><path d="M1.5 9.5 L9 1.8 L16.5 9.5" fill="none" stroke="#3c4a50" stroke-width="1.8"/><rect x="4" y="9" width="2.3" height="2.3" fill="#1f8fdc"/><rect x="6.8" y="9" width="2.3" height="2.3" fill="#1f8fdc"/><rect x="4" y="11.8" width="2.3" height="2.3" fill="#1f8fdc"/><rect x="6.8" y="11.8" width="2.3" height="2.3" fill="#1f8fdc"/><rect x="10" y="9" width="4" height="6" fill="#d0701c"/><rect x="1.5" y="14.6" width="15" height="1" fill="#7c8c90"/></svg>
<svg class="ab" style="left:14px;top:178px" width="16" height="16" viewBox="0 0 16 16"><path d="M3.5 6 L3 10.5 L8 15 L13 10.5 L12.5 6" fill="none" stroke="#6f8894" stroke-width="1.2"/><path d="M4 1.5 L12 1.5" stroke="#6f8894" stroke-width="1.2"/><ellipse cx="4" cy="3.3" rx="2.4" ry="2.9" fill="#b8672a"/><ellipse cx="12" cy="3.3" rx="2.4" ry="2.9" fill="#f0b860"/><path d="M0 10 Q0 6.3 2.5 6.3 L7 6.3 L7 10Z" fill="#f08a1c"/><path d="M9 6.3 L13.5 6.3 Q16 6.3 16 10 L9 10Z" fill="#5ea040"/><ellipse cx="8" cy="8.6" rx="2.4" ry="2.9" fill="#f6a868"/><path d="M4.2 15.8 Q4.2 11.6 6.5 11.6 L9.5 11.6 Q11.8 11.6 11.8 15.8Z" fill="#1a8ee0"/></svg>
<svg class="ab" style="left:240px;top:183px" width="10" height="6" viewBox="0 0 10 6"><path d="M0.5 0.5 L5 5 L9.5 0.5" fill="none" stroke="#555" stroke-width="1"/></svg>
<svg class="ab" style="left:502px;top:171px" width="10" height="6" viewBox="0 0 10 6"><path d="M0.5 0.5 L5 5 L9.5 0.5" fill="none" stroke="#555" stroke-width="1"/></svg>
<svg class="ab" style="left:234px;top:208px" width="17" height="11" viewBox="0 0 17 11"><rect x="5" y="0.5" width="7" height="4" rx="1" fill="#2f4552"/><circle cx="4.2" cy="6.2" r="4.2" fill="#2f4552"/><circle cx="12.8" cy="6.2" r="4.2" fill="#2f4552"/><circle cx="4.2" cy="6.4" r="3" fill="#86c840"/><circle cx="12.8" cy="6.4" r="3" fill="#86c840"/></svg>
<div class="ab" style="left:347px;top:163px;width:14px;height:19px;border:1px solid #e2e2e2;border-radius:2px"></div>
<div class="ab" style="left:348px;top:172px;width:12px;height:1px;background:#e6e6e6"></div>
<svg class="ab" style="left:350px;top:166px" width="7" height="4" viewBox="0 0 7 4"><path d="M0 4 L3.5 0 L7 4Z" fill="#1a1a1a"/></svg>
<svg class="ab" style="left:350px;top:175px" width="7" height="4" viewBox="0 0 7 4"><path d="M0 0 L3.5 4 L7 0Z" fill="#1a1a1a"/></svg>
<svg class="ab" style="left:527px;top:168px" width="15" height="9" viewBox="0 0 15 9"><path d="M0.2 4.5 L4.8 0 L8 0 L5 3 L14.5 3 L14.5 6 L5 6 L8 9 L4.8 9Z" fill="#1c1c1c"/></svg>
<svg class="ab" style="left:550px;top:168px" width="15" height="9" viewBox="0 0 15 9"><path d="M14.5 4.5 L10 0.3 L7.5 0.3 L10.4 3.2 L1 3.2 L1 5.8 L10.4 5.8 L7.5 8.7 L10 8.7Z" fill="#1c1c1c"/></svg>
<svg class="ab" style="left:291px;top:197px" width="17" height="16" viewBox="0 0 17 16"><rect x="4" y="1" width="9.5" height="8" fill="#cfe6f6" stroke="#8db4cc" stroke-width="0.8"/><path d="M5.5 3.2h6M5.5 5h6M5.5 6.8h3" stroke="#6a8ea8" stroke-width="0.8"/><rect x="2.5" y="7" width="1.6" height="2.5" fill="#3c5260"/><rect x="13.4" y="7" width="1.6" height="2.5" fill="#3c5260"/><path d="M0.5 11 Q0.5 9 2.5 9 L14.5 9 Q16.5 9 16.5 11 L16.5 16 L0.5 16Z" fill="#4a6572"/><rect x="4" y="13.2" width="9" height="1.4" rx="0.7" fill="#f2f6f8"/><rect x="13.5" y="10" width="1.2" height="1.2" fill="#8ad040"/></svg>
<svg class="ab" style="left:323px;top:211px" width="8" height="4" viewBox="0 0 8 4"><path d="M0 0 L8 0 L4 4Z" fill="#1a1a1a"/></svg>
<svg class="ab" style="left:356px;top:198px" width="17" height="16" viewBox="0 0 17 16"><g fill="none" stroke="#1a8de0" stroke-width="2.5"><path d="M7 3.5 L5.5 3.5 A4.3 4.3 0 0 0 5.5 12.1 L6.5 12.1"/><path d="M9.5 3.5 L10.7 3.5 A4.3 4.3 0 0 1 10.7 12.1 L9.5 12.1"/></g><path d="M6.3 0 L9.8 3.5 L6.3 7Z M10.2 8.6 L6.7 12.1 L10.2 15.6Z" fill="#1a8de0"/></svg>
<svg class="ab" style="left:404px;top:197px" width="16" height="16" viewBox="0 0 16 16"><path d="M1 0.5 L9 0.5 L12 3.5 L12 15.5 L1 15.5Z" fill="#dbeefa" stroke="#b6d6ee" stroke-width="0.8"/><path d="M9 0.5 L12 3.5 L9 3.5Z" fill="#1a8ee0"/><rect x="5.5" y="7.3" width="10" height="8.4" fill="#fff" stroke="#1d7a3c" stroke-width="1.4"/><path d="M8 9.5 L13 13.8 M13 9.5 L8 13.8" stroke="#1d7a3c" stroke-width="1.6"/></svg>
<svg class="ab" style="left:462px;top:197px" width="12" height="16" viewBox="0 0 12 16"><rect x="0.5" y="0.5" width="11" height="15" rx="1" fill="#3e5562"/><rect x="2" y="2" width="8" height="3" fill="#a7d96e"/><g fill="#f4f6f8"><rect x="2" y="6.5" width="1.6" height="1.4"/><rect x="4.4" y="6.5" width="1.6" height="1.4"/><rect x="6.8" y="6.5" width="1.6" height="1.4"/><rect x="2" y="8.8" width="1.6" height="1.4"/><rect x="4.4" y="8.8" width="1.6" height="1.4"/><rect x="6.8" y="8.8" width="1.6" height="1.4"/><rect x="2" y="11.1" width="1.6" height="1.4"/><rect x="4.4" y="11.1" width="1.6" height="1.4"/><rect x="6.8" y="11.1" width="1.6" height="1.4"/></g><rect x="9" y="6.5" width="1.6" height="3.7" fill="#6cc040"/><rect x="9" y="11.1" width="1.6" height="3" fill="#f6a81c"/></svg>
<svg class="ab" style="left:520px;top:198px" width="16" height="16" viewBox="0 0 16 16"><defs><linearGradient id="fg" x1="0" x2="1"><stop offset="0" stop-color="#4d6673"/><stop offset="0.45" stop-color="#7d949e"/><stop offset="1" stop-color="#4a6270"/></linearGradient></defs><path d="M0 0 L14 0 L14 1.8 L8.9 7 L8.9 12.4 L5.6 14.8 L5 7 L0 2Z" fill="url(#fg)"/><rect x="11.8" y="2.6" width="3" height="2.8" rx="0.8" fill="#fff" stroke="#3f5662" stroke-width="1.2"/></svg>
<svg class="ab" style="left:553px;top:211px" width="8" height="4" viewBox="0 0 8 4"><path d="M0 0 L8 0 L4 4Z" fill="#1a1a1a"/></svg>
<svg class="ab" style="left:584px;top:199px" width="15" height="13" viewBox="0 0 15 13"><path d="M4.5 0 L4.5 11" stroke="#1a1a1a" stroke-width="1.8"/><path d="M0.8 7.5 L4.5 11.5 L8.2 7.5" fill="none" stroke="#1a1a1a" stroke-width="1.8"/><path d="M11 0 L11 6 M8 3 L14 3" stroke="#1f8fe0" stroke-width="1.8"/></svg>
<svg class="ab" style="left:637px;top:198px" width="15" height="13" viewBox="0 0 15 13"><path d="M4.5 1.5 L4.5 13" stroke="#1a1a1a" stroke-width="1.8"/><path d="M0.8 5 L4.5 1 L8.2 5" fill="none" stroke="#1a1a1a" stroke-width="1.8"/><path d="M8 10 L14 10" stroke="#1f8fe0" stroke-width="1.8"/></svg>
<svg class="ab" style="left:699px;top:197px" width="16" height="16" viewBox="0 0 16 16"><path d="M1.3 11.2 L6.4 15 L14.5 8" fill="none" stroke="#9eacb8" stroke-width="3.2"/><path d="M1.3 4.6 L6.4 8.9 L14.5 1.2" fill="none" stroke="#2e9a3a" stroke-width="3.2"/></svg>
<svg class="ab" style="left:740px;top:211px" width="8" height="4" viewBox="0 0 8 4"><path d="M0 0 L8 0 L4 4Z" fill="#1a1a1a"/></svg>
<svg class="ab" style="left:769px;top:198px" width="17" height="16" viewBox="0 0 17 16"><rect x="0" y="0" width="16" height="14" fill="#38a2e8"/><g fill="#fff"><rect x="1.2" y="2.2" width="2" height="2"/><rect x="4.2" y="2.2" width="2" height="2"/><rect x="7.2" y="2.2" width="2" height="2"/><rect x="10.2" y="2.2" width="2" height="2"/><rect x="13.2" y="2.2" width="2" height="2"/><rect x="1.2" y="5.2" width="2" height="2"/><rect x="4.2" y="5.2" width="2" height="2"/><rect x="7.2" y="5.2" width="2" height="2"/><rect x="10.2" y="5.2" width="2" height="2"/><rect x="13.2" y="5.2" width="2" height="2"/><rect x="1.2" y="8.2" width="2" height="2"/><rect x="4.2" y="8.2" width="2" height="2"/><rect x="7.2" y="8.2" width="2" height="2"/><rect x="10.2" y="8.2" width="2" height="2"/><rect x="13.2" y="8.2" width="2" height="2"/><rect x="1.2" y="11.2" width="2" height="2"/><rect x="4.2" y="11.2" width="2" height="2"/><rect x="7.2" y="11.2" width="2" height="2"/><rect x="10.2" y="11.2" width="2" height="2"/><rect x="13.2" y="11.2" width="2" height="2"/></g><rect x="8" y="6" width="8.2" height="8.7" fill="#2c3f4a"/><rect x="9.2" y="6.4" width="5.8" height="2.8" fill="#cfe9f6"/><rect x="9.2" y="9.2" width="5.8" height="1.6" fill="#f08a22"/><rect x="10" y="11.6" width="4.2" height="3.1" fill="#d7e2e8"/></svg>
<svg class="ab" style="left:801px;top:211px" width="8" height="4" viewBox="0 0 8 4"><path d="M0 0 L8 0 L4 4Z" fill="#1a1a1a"/></svg>
<svg class="ab" style="left:307px;top:297px" width="16" height="12" viewBox="0 0 16 12"><ellipse cx="4" cy="3.6" rx="2.8" ry="3.6" fill="#f2a45c"/><ellipse cx="12" cy="3.6" rx="2.8" ry="3.6" fill="#f2b05c"/><path d="M0 12 Q0 7.5 2.5 7.3 L5.5 7.3 Q8 7.5 8 12Z" fill="#1a8ee0"/><path d="M8 12 Q8 7.5 10.5 7.3 L13.5 7.3 Q16 7.5 16 12Z" fill="#5ca43c"/></svg>
<svg class="ab" style="left:326px;top:461px" width="16" height="17" viewBox="0 0 16 17"><path d="M0.5 9.5 C0 3 4 0.8 8 0.8 C12 0.8 16 3 15.5 9.5 C14 6.5 12 5 8 5 C4 5 2 6.5 0.5 9.5Z" fill="#5a9e2c"/><path d="M7 4.5 L10.2 4.5 C10.2 9 9.2 12.5 8.2 15.2 L4.2 15.2 C6 12 7.6 9 7 4.5Z" fill="#e2570e"/><path d="M0 17 C2 15 5 14.3 8 14.3 C11 14.3 13 15.3 13.6 17Z" fill="#f2b232"/></svg>
<svg class="ab" style="left:326px;top:567px" width="15" height="15" viewBox="0 0 15 15"><path d="M7.5 0.5 L9.4 5.2 L14.5 5.6 L10.6 8.9 L11.8 14 L7.5 11.3 L3.2 14 L4.4 8.9 L0.5 5.6 L5.6 5.2Z" fill="#94be3e"/></svg>
<svg class="ab" style="left:0;top:0" width="1015" height="791"><g stroke="#e8141b" stroke-width="4.6" stroke-linecap="round" stroke-linejoin="round" fill="none"><path d="M642.5 65.5 L595 127.5"/><path d="M597.5 112 L595 127.5 L610 120.5"/><path d="M674 135 L485 197.5"/><path d="M496 186.5 L485 197.5 L502 200.5"/></g></svg>
<svg class="ab" style="left:429px;top:19px" width="13" height="21" viewBox="0 0 13 21"><path d="M1 1 L1 17 L4.8 13.4 L7.6 19.6 L10 18.6 L7.3 12.5 L12.2 12.3 Z" fill="#fff" stroke="#111" stroke-width="1.1" stroke-linejoin="round"/></svg>
</body></html>
